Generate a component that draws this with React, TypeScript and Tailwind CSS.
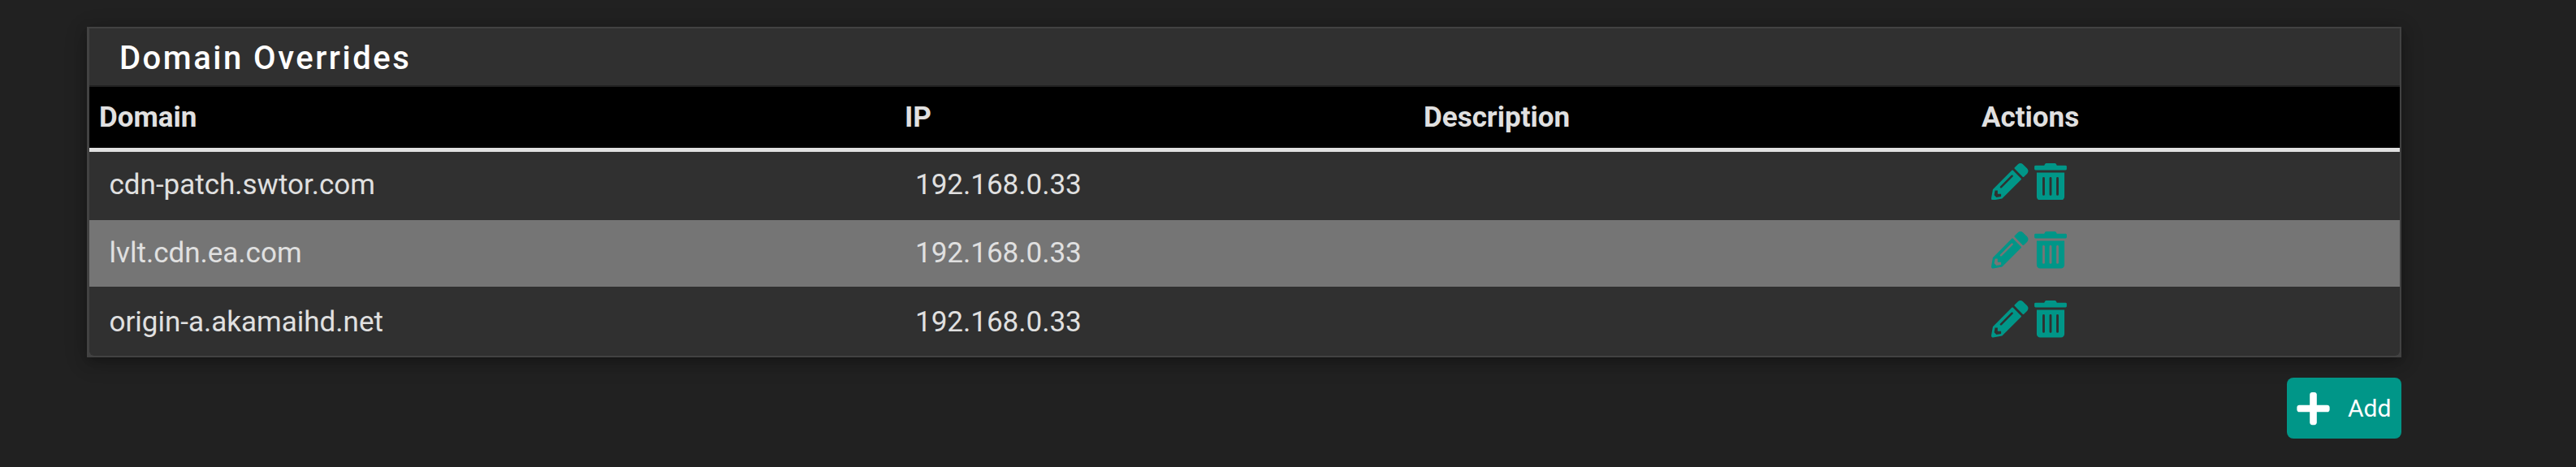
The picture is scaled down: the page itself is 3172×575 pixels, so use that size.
import { FaPencilAlt, FaPlus, FaTrashAlt } from "react-icons/fa";

type Override = {
  domain: string;
  ip: string;
  description: string;
};

const overrides: Override[] = [
  { domain: "cdn-patch.swtor.com", ip: "192.168.0.33", description: "" },
  { domain: "lvlt.cdn.ea.com", ip: "192.168.0.33", description: "" },
  { domain: "origin-a.akamaihd.net", ip: "192.168.0.33", description: "" },
];

const rowStyles = [
  "h-[84px] *:pb-[3px] *:last:pb-[6px]",
  "h-[82px] bg-[#757575] *:pb-[1px] *:last:pb-[3px]",
  "h-[85px] *:pt-[2px] *:last:pt-0",
];

function Actions() {
  return (
    <div className="flex gap-[7.5px] pb-[5px] text-[45.5px] text-[#009688]">
      <a href="#" title="Edit domain override">
        <FaPencilAlt />
      </a>
      <a href="#" title="Delete domain override">
        <FaTrashAlt className="w-[40px]" />
      </a>
    </div>
  );
}

export default function App() {
  return (
    <div className="min-h-[575px] bg-[#212121] pt-[33px] pr-[215px] pl-[107px] font-[Roboto,sans-serif] text-[35px] leading-[46px] text-[#e0e0e0]">
      <div className="border-2 border-l-[3px] border-[#424242] bg-[#424242] shadow-[0_5px_14px_rgba(0,0,0,0.26),0_5px_28px_rgba(0,0,0,0.16)]">
        <div className="overflow-hidden rounded-b-[6px] bg-[#303030]">
          <h2 className="flex h-[72px] items-center border-b-2 border-[#212121] pt-[3px] pl-[37px] text-[40px] font-medium tracking-[2.5px] text-white">
            Domain Overrides
          </h2>
          <table className="w-full table-fixed border-separate border-spacing-0 text-left">
            <colgroup>
              <col className="w-[992px]" />
              <col className="w-[639px]" />
              <col className="w-[687px]" />
              <col />
            </colgroup>
            <thead>
              <tr className="h-[80px] bg-black *:border-b-[5px] *:border-[#e0e0e0] *:pl-[12px]">
                <th>Domain</th>
                <th>IP</th>
                <th>Description</th>
                <th>Actions</th>
              </tr>
            </thead>
            <tbody>
              {overrides.map((row, i) => (
                <tr key={row.domain} className={rowStyles[i]}>
                  <td className="pl-[24.5px]">{row.domain}</td>
                  <td className="pl-[25px]">{row.ip}</td>
                  <td className="pl-[25px]">{row.description}</td>
                  <td className="pl-[24px]">
                    <Actions />
                  </td>
                </tr>
              ))}
            </tbody>
          </table>
        </div>
      </div>

      <nav className="flex justify-end pt-[25px]">
        <button className="flex h-[75px] w-[141px] items-center gap-[22px] rounded-[8px] bg-[#009688] pl-[12px] text-[30px] text-white">
          <FaPlus className="h-[46px] w-[41px] shrink-0" />
          Add
        </button>
      </nav>
    </div>
  );
}
